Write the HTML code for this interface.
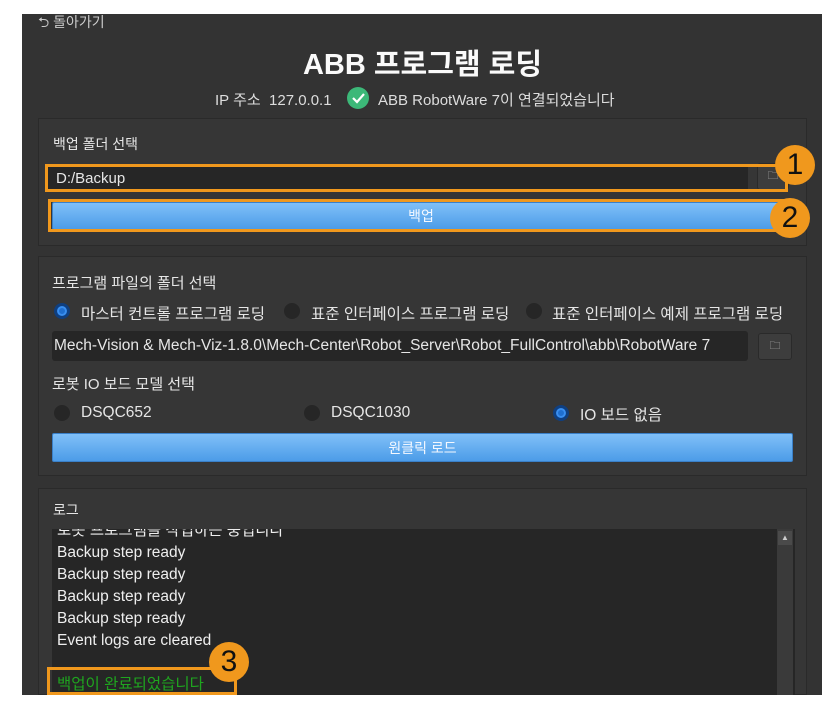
<!DOCTYPE html>
<html><head><meta charset="utf-8"><style>
*{margin:0;padding:0;box-sizing:border-box}
body{width:833px;height:714px;background:#fff;position:relative;overflow:hidden;font-family:"Liberation Sans","Noto Sans CJK KR",sans-serif;color:#e6e6e6}
.a{position:absolute}
.dark{left:22px;top:14px;width:800px;height:681px;background:#333}
.grp{background:#363636;border:1px solid #2a2a2a}
.t{font-size:14px;white-space:nowrap}
.radio{width:16px;height:16px;border-radius:50%;background:#262626}
.radio.on{background:#1f6fd0;border:3px solid #0f3f80;box-shadow:inset 0 0 0 2px #3a8ff0}
.btn{background:linear-gradient(#80c0f8,#4c9ce8);border:1px solid #3a80c8;border-radius:2px;color:#f4f8ff;font-size:14px;text-align:center}
.fb{background:#3d3d3d;border:1px solid #2a2a2a;border-radius:3px}
.ob{border:3px solid #f0981d}
.circ{width:40px;height:40px;border-radius:50%;background:#f0981d;color:#111;font-size:30px;text-align:center;line-height:40px;font-family:"Liberation Sans",sans-serif}
</style></head><body>
<div class="a dark"></div>
<div class="a t" style="left:38px;top:12px;color:#ccc;font-size:14px">⮌ 돌아가기</div>
<div class="a" style="left:0;width:845px;top:41px;text-align:center;font-size:29px;font-weight:bold;color:#fafafa">ABB 프로그램 로딩</div>
<div class="a t" style="left:215px;top:89px;color:#ddd;font-size:15px">IP 주소 &nbsp;127.0.0.1</div>
<div class="a" style="left:347px;top:87px;width:22px;height:22px;border-radius:50%;background:#3cb878"><svg width="22" height="22"><path d="M6 11l4 4 7-8" stroke="#fff" stroke-width="2.2" fill="none"/></svg></div>
<div class="a t" style="left:378px;top:89px;color:#ddd;font-size:15px">ABB RobotWare 7이 연결되었습니다</div>

<div class="a grp" style="left:38px;top:118px;width:769px;height:128px"></div>
<div class="a t" style="left:53px;top:134px">백업 폴더 선택</div>
<div class="a" style="left:48px;top:166px;width:700px;height:24px;background:#262626"></div>
<div class="a t" style="left:56px;top:170px;font-size:15px">D:/Backup</div>
<div class="a fb" style="left:757px;top:163px;width:32px;height:27px;color:#bbb;font-size:11px;text-align:center;line-height:25px">🗀</div>
<div class="a ob" style="left:45px;top:164px;width:743px;height:28px"></div>
<div class="a btn" style="left:52px;top:202px;width:738px;height:28px;line-height:27px">백업</div>
<div class="a ob" style="left:48px;top:199px;width:744px;height:33px"></div>
<div class="a circ" style="left:775px;top:145px">1</div>
<div class="a circ" style="left:770px;top:198px">2</div>

<div class="a grp" style="left:38px;top:256px;width:769px;height:220px"></div>
<div class="a t" style="left:52px;top:272px;font-size:15px">프로그램 파일의 폴더 선택</div>
<div class="a radio on" style="left:54px;top:303px"></div>
<div class="a t" style="left:81px;top:302px;font-size:15.5px;width:193px;overflow:hidden">마스터 컨트롤 프로그램 로딩</div>
<div class="a radio" style="left:284px;top:303px"></div>
<div class="a t" style="left:311px;top:302px;font-size:15.5px;width:206px;overflow:hidden">표준 인터페이스 프로그램 로딩</div>
<div class="a radio" style="left:526px;top:303px"></div>
<div class="a t" style="left:552px;top:302px;font-size:15.5px;width:245px;overflow:hidden">표준 인터페이스 예제 프로그램 로딩</div>
<div class="a" style="left:52px;top:331px;width:696px;height:30px;background:#262626;border-radius:3px"></div>
<div class="a t" style="left:54px;top:337px;font-size:15.5px;width:692px;overflow:hidden">Mech-Vision &amp; Mech-Viz-1.8.0\Mech-Center\Robot_Server\Robot_FullControl\abb\RobotWare 7</div>
<div class="a fb" style="left:758px;top:333px;width:34px;height:27px;color:#bbb;font-size:11px;text-align:center;line-height:25px">🗀</div>
<div class="a t" style="left:52px;top:373px;font-size:15px">로봇 IO 보드 모델 선택</div>
<div class="a radio" style="left:54px;top:405px"></div>
<div class="a t" style="left:81px;top:404px;font-size:15.5px">DSQC652</div>
<div class="a radio" style="left:304px;top:405px"></div>
<div class="a t" style="left:331px;top:404px;font-size:15.5px">DSQC1030</div>
<div class="a radio on" style="left:553px;top:405px"></div>
<div class="a t" style="left:580px;top:403px;font-size:15.5px">IO 보드 없음</div>
<div class="a btn" style="left:52px;top:433px;width:741px;height:29px;line-height:28px">원클릭 로드</div>

<div class="a grp" style="left:38px;top:488px;width:769px;height:207px"></div>
<div class="a t" style="left:53px;top:500px">로그</div>
<div class="a" style="left:52px;top:529px;width:743px;height:166px;background:#262626;overflow:hidden">
<div class="a t" style="left:5px;top:-9px;line-height:22px;font-size:15.5px;color:#eee">로봇 프로그램을 작업하는 중입니다<br>Backup step ready<br>Backup step ready<br>Backup step ready<br>Backup step ready<br>Event logs are cleared<br><br><span style="color:#1fa51f">백업이 완료되었습니다</span></div>
<div class="a" style="left:725px;top:0;width:16px;height:166px;background:#3a3a3a"></div>
<div class="a" style="left:726px;top:2px;width:14px;height:14px;background:#4a4a4a;color:#ccc;font-size:8px;text-align:center;line-height:14px">▲</div>
</div>
<div class="a ob" style="left:47px;top:667px;width:190px;height:28px"></div>
<div class="a circ" style="left:209px;top:642px">3</div>
</body></html>
